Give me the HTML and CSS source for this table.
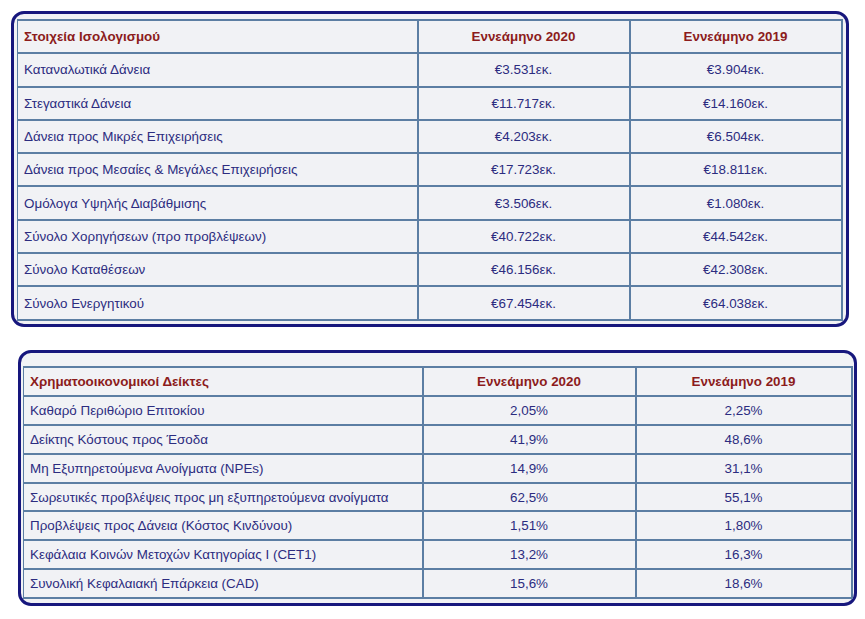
FILE: index.html
```html
<!DOCTYPE html>
<html lang="el">
<head>
    <meta charset="UTF-8">
    <meta name="viewport" content="width=device-width, initial-scale=1.0">
    <title>Στοιχεία Ισολογισμού & Χρηματοοικονομικοί Δείκτες</title>
    <link rel="stylesheet" href="styles.css">
</head>
<body>
    <!-- Balance sheet -->
    <div class="panel panel-balance">
        <table class="data-table">
            <colgroup>
                <col class="col-label">
                <col class="col-value">
                <col class="col-value">
            </colgroup>
            <thead>
                <tr>
                    <th class="label">Στοιχεία Ισολογισμού</th>
                    <th>Εννεάμηνο 2020</th>
                    <th>Εννεάμηνο 2019</th>
                </tr>
            </thead>
            <tbody>
                <tr><td class="label">Καταναλωτικά Δάνεια</td><td>€3.531εκ.</td><td>€3.904εκ.</td></tr>
                <tr><td class="label">Στεγαστικά Δάνεια</td><td>€11.717εκ.</td><td>€14.160εκ.</td></tr>
                <tr><td class="label">Δάνεια προς Μικρές Επιχειρήσεις</td><td>€4.203εκ.</td><td>€6.504εκ.</td></tr>
                <tr><td class="label">Δάνεια προς Μεσαίες &amp; Μεγάλες Επιχειρήσεις</td><td>€17.723εκ.</td><td>€18.811εκ.</td></tr>
                <tr><td class="label">Ομόλογα Υψηλής Διαβάθμισης</td><td>€3.506εκ.</td><td>€1.080εκ.</td></tr>
                <tr><td class="label">Σύνολο Χορηγήσεων (προ προβλέψεων)</td><td>€40.722εκ.</td><td>€44.542εκ.</td></tr>
                <tr><td class="label">Σύνολο Καταθέσεων</td><td>€46.156εκ.</td><td>€42.308εκ.</td></tr>
                <tr><td class="label">Σύνολο Ενεργητικού</td><td>€67.454εκ.</td><td>€64.038εκ.</td></tr>
            </tbody>
        </table>
    </div>

    <!-- Financial ratios -->
    <div class="panel panel-ratios">
        <table class="data-table">
            <colgroup>
                <col class="col-label">
                <col class="col-value">
                <col class="col-value-wide">
            </colgroup>
            <thead>
                <tr>
                    <th class="label">Χρηματοοικονομικοί Δείκτες</th>
                    <th>Εννεάμηνο 2020</th>
                    <th>Εννεάμηνο 2019</th>
                </tr>
            </thead>
            <tbody>
                <tr><td class="label">Καθαρό Περιθώριο Επιτοκίου</td><td>2,05%</td><td>2,25%</td></tr>
                <tr><td class="label">Δείκτης Κόστους προς Έσοδα</td><td>41,9%</td><td>48,6%</td></tr>
                <tr><td class="label">Μη Εξυπηρετούμενα Ανοίγματα (NPEs)</td><td>14,9%</td><td>31,1%</td></tr>
                <tr><td class="label">Σωρευτικές προβλέψεις προς μη εξυπηρετούμενα ανοίγματα</td><td>62,5%</td><td>55,1%</td></tr>
                <tr><td class="label">Προβλέψεις προς Δάνεια (Κόστος Κινδύνου)</td><td>1,51%</td><td>1,80%</td></tr>
                <tr><td class="label">Κεφάλαια Κοινών Μετοχών Κατηγορίας Ι (CET1)</td><td>13,2%</td><td>16,3%</td></tr>
                <tr><td class="label">Συνολική Κεφαλαιακή Επάρκεια (CAD)</td><td>15,6%</td><td>18,6%</td></tr>
            </tbody>
        </table>
    </div>
</body>
</html>
```

FILE: styles.css
```css
/* Global Styles */
body {
    margin: 0;
    padding: 11px 0 0 0;
    background: #fff;
    font-family: "Liberation Sans", Arial, sans-serif;
    font-size: 13.4px;
    color: #2c2c80;
}

/* Rounded panels */
.panel {
    box-sizing: border-box;
    background: #f1f2f5;
    border: 3px solid #17177d;
    border-radius: 13px;
}
.panel-balance {
    margin-left: 11px;
    width: 838px;
    height: 316px;
    padding: 5px 5px 0 3px;
}
.panel-ratios {
    margin: 23px 0 0 18px;
    width: 839px;
    height: 256px;
    padding: 13px 3px 0 2px;
}

/* Tables */
.data-table {
    width: 100%;
    border-collapse: collapse;
    table-layout: fixed;
}
.data-table th,
.data-table td {
    border: 2px solid #5c7ea3;
    padding: 0 6px;
    text-align: center;
    white-space: nowrap;
}
.data-table th {
    color: #8c1c1c;
    font-weight: bold;
}
.data-table .label {
    text-align: left;
    border-left-width: 1px;
}

.panel-balance .col-label { width: 400px; }
.panel-balance .col-value { width: 212px; }
.panel-balance tr { height: 33.3px; }

.panel-ratios .col-label { width: 399px; }
.panel-ratios .col-value { width: 213px; }
.panel-ratios .col-value-wide { width: 216px; }
.panel-ratios tr { height: 28.9px; }
```
